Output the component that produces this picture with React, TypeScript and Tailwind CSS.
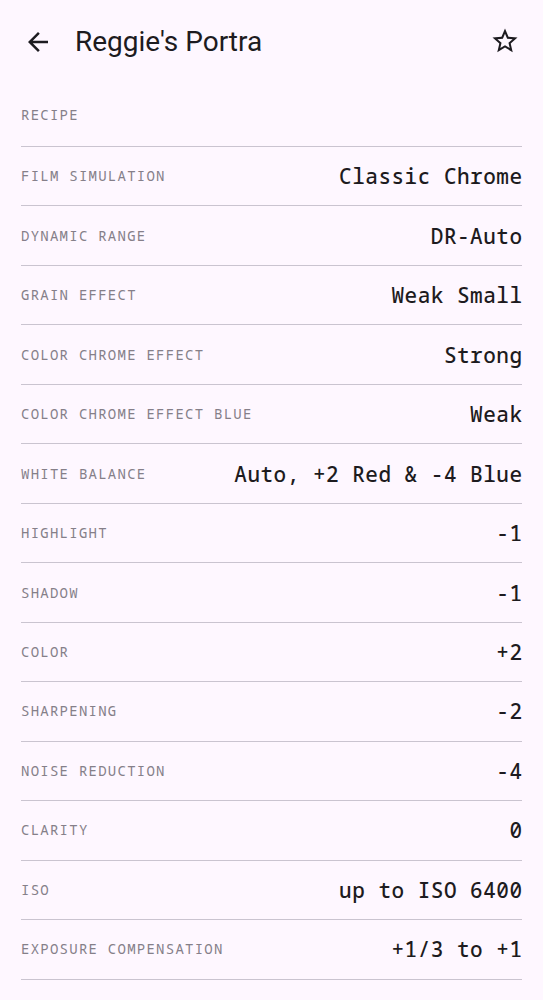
import React from "react";

const rows: [string, string][] = [
  ["FILM SIMULATION", "Classic Chrome"],
  ["DYNAMIC RANGE", "DR-Auto"],
  ["GRAIN EFFECT", "Weak Small"],
  ["COLOR CHROME EFFECT", "Strong"],
  ["COLOR CHROME EFFECT BLUE", "Weak"],
  ["WHITE BALANCE", "Auto, +2 Red & -4 Blue"],
  ["HIGHLIGHT", "-1"],
  ["SHADOW", "-1"],
  ["COLOR", "+2"],
  ["SHARPENING", "-2"],
  ["NOISE REDUCTION", "-4"],
  ["CLARITY", "0"],
  ["ISO", "up to ISO 6400"],
  ["EXPOSURE COMPENSATION", "+1/3 to +1"],
];

const mono = "font-['Noto_Sans_Mono','Droid_Sans_Mono','DejaVu_Sans_Mono',monospace]";

export default function App() {
  return (
    <div className="min-h-[1000px] w-full bg-[#fef7ff] text-[#1d1b20]">
      <header className="flex h-[84px] items-center">
        <div className="ml-[23px] flex h-[30px] w-[30px] items-center justify-center">
          <svg width="30" height="30" viewBox="0 0 24 24" fill="#1d1b20">
            <path d="M20 11H7.83l5.59-5.59L12 4l-8 8 8 8 1.41-1.41L7.83 13H20v-2z" />
          </svg>
        </div>
        <h1 className="ml-[22px] flex-1 font-['Roboto',sans-serif] text-[28px] leading-none">
          Reggie's Portra
        </h1>
        <div className="mr-[23px] -mt-[3px] flex h-[30px] w-[30px] items-center justify-center">
          <svg width="30" height="30" viewBox="0 0 24 24" fill="#1d1b20">
            <path d="M22 9.24l-7.19-.62L12 2 9.19 8.63 2 9.24l5.46 4.73L5.82 21 12 17.27 18.18 21l-1.63-7.03L22 9.24zM12 15.4l-3.76 2.27 1-4.28-3.32-2.88 4.38-.38L12 6.1l1.71 4.04 4.38.38-3.32 2.88 1 4.28L12 15.4z" />
          </svg>
        </div>
      </header>
      <div className="px-[21px]">
        <div className="h-[63px] border-b border-[#cac4d0] pt-[18px]">
          <span className={`${mono} text-[14px] leading-[18px] tracking-[1.25px] text-[#857f89]`}>RECIPE</span>
        </div>
        {rows.map(([k, v]) => (
          <div key={k} className="flex h-[59.47px] items-center justify-between border-b border-[#cac4d0]">
            <span className={`${mono} text-[14px] leading-[18px] tracking-[1.25px] text-[#857f89]`}>{k}</span>
            <span className={`${mono} text-[21px] font-medium leading-[24px] tracking-[0.5px] text-[#1d1b20] -mr-[0.5px]`}>{v}</span>
          </div>
        ))}
      </div>
    </div>
  );
}
